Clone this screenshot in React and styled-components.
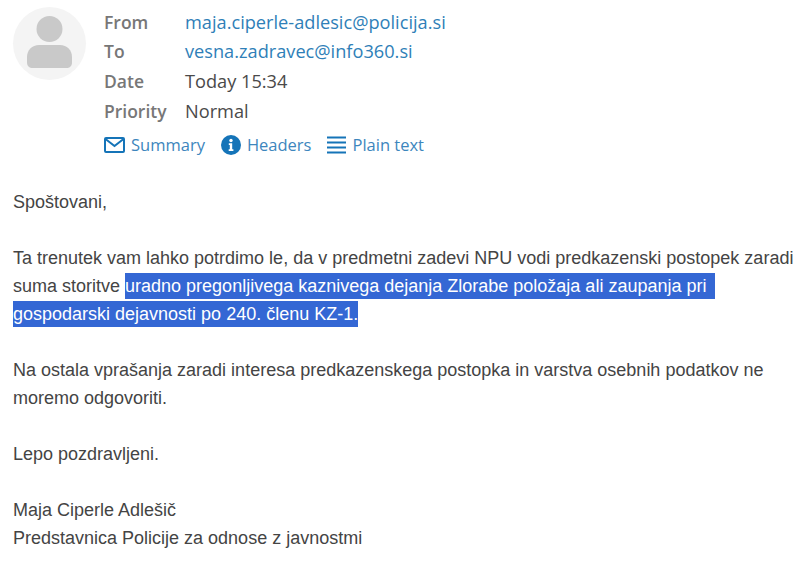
import styled, { createGlobalStyle } from 'styled-components';

const GlobalStyle = createGlobalStyle`
  html, body {
    margin: 0;
    padding: 0;
    background: #fff;
  }
`;

const Page = styled.main`
  width: 800px;
  height: 563px;
  overflow: hidden;
  box-sizing: border-box;
  padding: 7px 0 0 13px;
`;

const Header = styled.header`
  display: flex;
  gap: 18px;
`;

const Avatar = styled.div`
  width: 73px;
  height: 73px;
  border-radius: 50%;
  background: #f4f4f4;
  flex-shrink: 0;
  display: flex;
  justify-content: center;
  padding-top: 9px;
  box-sizing: border-box;
`;

const Meta = styled.div`
  display: flex;
  flex-direction: column;
  font-family: "Open Sans", sans-serif;
`;

const Fields = styled.dl`
  display: grid;
  grid-template-columns: 81px auto;
  grid-auto-rows: 29.6px;
  align-items: center;
  margin: 0;
`;

const Label = styled.dt`
  color: #777;
  font-weight: 600;
  font-size: 17.5px;
`;

const Value = styled.dd`
  margin: 0;
  font-size: 18.2px;
  color: ${props => (props.$link ? '#2f7fb8' : '#4a4a4a')};
`;

const Links = styled.nav`
  display: flex;
  gap: 16px;
  margin-top: 8px;
`;

const LinkItem = styled.a`
  display: flex;
  align-items: center;
  gap: 6px;
  color: #3d86bd;
  font-size: 16.5px;
`;

const Body = styled.article`
  margin-top: 32px;
  font-family: "Liberation Sans", Arial, sans-serif;
  font-size: 18px;
  line-height: 28px;
  color: #444;
`;

const Paragraph = styled.p`
  margin: 0 0 28px;
`;

const Selected = styled.span`
  background: #3467d4;
  color: #fff;
  padding: 3px ${props => (props.$trailing ? '9px' : '0')} 3px 0;
`;

const Person = () => (
  <svg width="45" height="52" viewBox="0 0 45 52" fill="#c9c9c9">
    <circle cx="22.5" cy="13" r="13" />
    <path d="M12 29h21c7 0 12 5 12 12v5c0 4-2 6-6 6H6c-4 0-6-2-6-6v-5c0-7 5-12 12-12z" />
  </svg>
);

const MailIcon = () => (
  <svg width="21" height="16" viewBox="0 0 21 16" fill="none" stroke="#1574b8" strokeWidth="2">
    <rect x="1" y="1" width="19" height="14" rx="1" />
    <path d="M1.5 2l9 7 9-7" />
  </svg>
);

const InfoIcon = () => (
  <svg width="20" height="20" viewBox="0 0 20 20">
    <circle cx="10" cy="10" r="10" fill="#1574b8" />
    <circle cx="10" cy="5.5" r="1.7" fill="#fff" />
    <path d="M7.8 8.3h3.4v6h1.2v1.6H7.7v-1.6h1.1V9.9h-1z" fill="#fff" />
  </svg>
);

const LinesIcon = () => (
  <svg width="19" height="18" viewBox="0 0 19 18" fill="#1574b8">
    <rect y="0.5" width="19" height="2" />
    <rect y="5.5" width="19" height="2" />
    <rect y="10.5" width="19" height="2" />
    <rect y="15.5" width="19" height="2" />
  </svg>
);

const App = () => {
  return (
    <Page>
      <GlobalStyle />
      <Header>
        <Avatar>
          <Person />
        </Avatar>
        <Meta>
          <Fields>
            <Label>From</Label>
            <Value $link>maja.ciperle-adlesic@policija.si</Value>
            <Label>To</Label>
            <Value $link>vesna.zadravec@info360.si</Value>
            <Label>Date</Label>
            <Value>Today 15:34</Value>
            <Label>Priority</Label>
            <Value>Normal</Value>
          </Fields>
          <Links>
            <LinkItem><MailIcon />Summary</LinkItem>
            <LinkItem><InfoIcon />Headers</LinkItem>
            <LinkItem><LinesIcon />Plain text</LinkItem>
          </Links>
        </Meta>
      </Header>
      <Body>
        <Paragraph>Spoštovani,</Paragraph>
        <Paragraph>
          Ta trenutek vam lahko potrdimo le, da v predmetni zadevi NPU vodi predkazenski postopek zaradi<br />
          suma storitve <Selected $trailing>uradno pregonljivega kaznivega dejanja Zlorabe položaja ali zaupanja pri</Selected><br />
          <Selected>gospodarski dejavnosti po 240. členu KZ-1.</Selected>
        </Paragraph>
        <Paragraph>
          Na ostala vprašanja zaradi interesa predkazenskega postopka in varstva osebnih podatkov ne<br />
          moremo odgovoriti.
        </Paragraph>
        <Paragraph>Lepo pozdravljeni.</Paragraph>
        <Paragraph>
          Maja Ciperle Adlešič<br />
          Predstavnica Policije za odnose z javnostmi
        </Paragraph>
      </Body>
    </Page>
  );
};

export default App;
